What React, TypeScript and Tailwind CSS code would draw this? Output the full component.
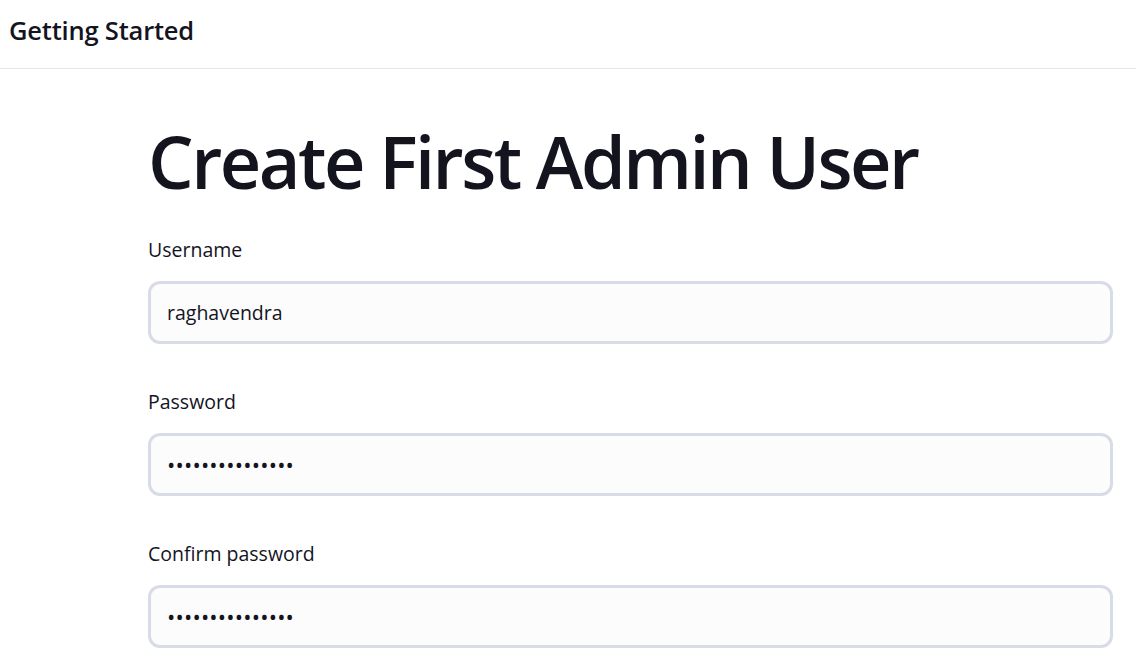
export default function App() {
  return (
    <div className="min-h-screen bg-white text-[#14141f]" style={{ fontFamily: '"Open Sans", "Noto Sans", sans-serif' }}>
      <header className="flex h-[69px] items-center border-b border-[#e6e6e6] px-[9px] pb-[6px]">
        <h2 className="text-[25.5px] font-semibold leading-none tracking-[-0.2px]">Getting Started</h2>
      </header>

      <main className="pl-[148px] pr-[23px] pt-[47px]">
        <h1 className="text-[72px] font-semibold leading-[90px] tracking-[-2.5px]">Create First Admin User</h1>

        <div className="mt-[30px] flex flex-col gap-[44px]">
          <Field label="Username" value="raghavendra" />
          <Field label="Password" value="•••••••••••••••" password />
          <Field label="Confirm password" value="•••••••••••••••" password />
        </div>
      </main>
    </div>
  );
}

function Field({ label, value, password }: { label: string; value: string; password?: boolean }) {
  return (
    <div>
      <label className="block text-[19.5px] leading-[28px]">{label}</label>
      <div className="mt-[17px] flex h-[63px] items-center rounded-[12px] border-[3px] border-[#d7dce6] bg-[#fcfcfc] px-[16px]">
        <span className={password ? "text-[22px] tracking-[0.2px]" : "text-[19.5px]"}>{value}</span>
      </div>
    </div>
  );
}
